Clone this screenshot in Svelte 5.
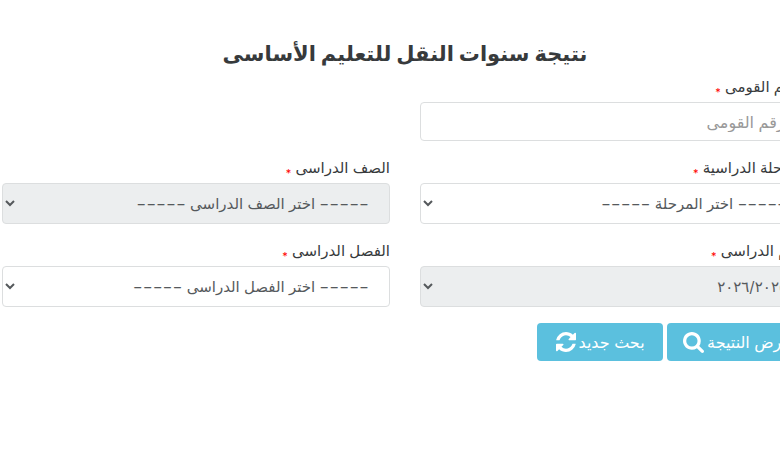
<script lang="ts">
  let nationalId = $state('');
  let stage = $state('');
  let grade = $state('');
  let year = $state('2026');
  let term = $state('');

  const reset = () => {
    nationalId = '';
    stage = '';
    grade = '';
    term = '';
  };
</script>

<main dir="rtl" lang="ar">
  <form onsubmit={(e) => e.preventDefault()}>
    <h1>نتيجة سنوات النقل للتعليم الأساسى</h1>

    <div class="grid">
      <div class="field wide">
        <label for="nationalId">الرقم القومى <span class="required">*</span></label>
        <input id="nationalId" type="text" placeholder="الرقم القومى" bind:value={nationalId}>
      </div>

      <div class="field">
        <label for="stage">المرحلة الدراسية <span class="required">*</span></label>
        <select id="stage" bind:value={stage}>
          <option value="">−−−−− اختر المرحلة −−−−−</option>
        </select>
      </div>

      <div class="field">
        <label for="grade">الصف الدراسى <span class="required">*</span></label>
        <select id="grade" bind:value={grade} disabled>
          <option value="">−−−−− اختر الصف الدراسى −−−−−</option>
        </select>
      </div>

      <div class="field">
        <label for="year">العام الدراسى <span class="required">*</span></label>
        <select id="year" bind:value={year} disabled>
          <option value="2026">٢٠٢٦/٢٠٢٥</option>
        </select>
      </div>

      <div class="field">
        <label for="term">الفصل الدراسى <span class="required">*</span></label>
        <select id="term" bind:value={term}>
          <option value="">−−−−− اختر الفصل الدراسى −−−−−</option>
        </select>
      </div>
    </div>

    <div class="actions">
      <button type="submit">
        عرض النتيجة
        <svg viewBox="0 0 1664 1664" width="21" height="21" aria-hidden="true">
          <path d="M1152 704q0-185-131.500-316.500T704 256 387.500 387.500 256 704t131.500 316.500T704 1152t316.500-131.500T1152 704zm512 832q0 52-38 90t-90 38q-54 0-90-38l-343-342q-179 124-399 124-143 0-273.500-55.500t-225-150-150-225T0 704t55.500-273.500 150-225 225-150T704 0t273.500 55.500 225 150 150 225T1408 704q0 220-124 399l343 343q37 37 37 90z" />
        </svg>
      </button>
      <button type="button" onclick={reset}>
        بحث جديد
        <svg viewBox="0 0 1536 1536" width="20" height="20" aria-hidden="true">
          <path d="M1511 928q0 5-1 7-64 268-268 434.500T764 1536q-146 0-282.500-55T238 1324l-129 129q-19 19-45 19t-45-19-19-45V960q0-26 19-45t45-19h448q26 0 45 19t19 45-19 45l-137 137q71 66 161 102t187 36q134 0 250-65t186-179q11-17 53-117 8-23 30-23h192q13 0 22.500 9.500t9.500 22.500zm25-800v448q0 26-19 45t-45 19h-448q-26 0-45-19t-19-45 19-45l138-138Q969 256 768 256q-134 0-250 65T332 500q-11 17-53 117-8 23-30 23H50q-13 0-22.500-9.500T18 608v-7q65-268 270-434.500T768 0q146 0 284 55.500T1297 212l130-129q19-19 45-19t45 19 19 45z" />
        </svg>
      </button>
    </div>
  </form>
</main>

<style>
  :global(body) {
    background: #fff;
  }

  main {
    overflow: hidden;
    color: #373a3c;
    font-family: Inter, "DejaVu Sans", sans-serif;
    font-size: 16px;
  }

  /* the form runs past the right edge of the viewport */
  form {
    margin: 0 -28px 0 2px;
    padding: 36px 0 48px;
  }

  h1 {
    margin: 0;
    font-size: 21px;
    font-weight: bold;
    line-height: 36px;
    text-align: center;
  }

  .grid {
    display: grid;
    grid-template-columns: 1fr 1fr;
    gap: 15px 30px;
    padding-top: 3px;
  }

  .wide {
    grid-column: 1 / -1;
    width: calc(50% - 15px);
  }

  label {
    display: block;
    height: 24px;
    margin-bottom: 3px;
    font-size: 15px;
    line-height: 24px;
    white-space: nowrap;
  }

  .required {
    color: #f00;
    font-size: 11px;
    line-height: 1;
    vertical-align: sub;
  }

  input,
  select {
    box-sizing: border-box;
    display: block;
    width: 100%;
    border: 1px solid #dcdedf;
    border-radius: 4px;
    background-color: #fff;
    color: #55595c;
    font: inherit;
  }

  input {
    height: 39px;
    padding: 6px 12px;
  }

  input::placeholder {
    color: #999;
    opacity: 1;
  }

  select {
    height: 41px;
    padding: 6px 16px 6px 0;
    font-size: 15px;
  }

  select:disabled {
    background-color: #eceeef;
    opacity: 1;
  }

  .actions {
    display: flex;
    gap: 4px;
    padding-top: 16px;
  }

  button {
    display: flex;
    align-items: center;
    justify-content: center;
    gap: 3px;
    min-width: 126px;
    height: 38px;
    padding: 0 16px;
    border: 0;
    border-radius: 4px;
    background: #5bc0de;
    color: #fff;
    font: inherit;
    white-space: nowrap;
  }

  svg {
    fill: currentColor;
  }
</style>
